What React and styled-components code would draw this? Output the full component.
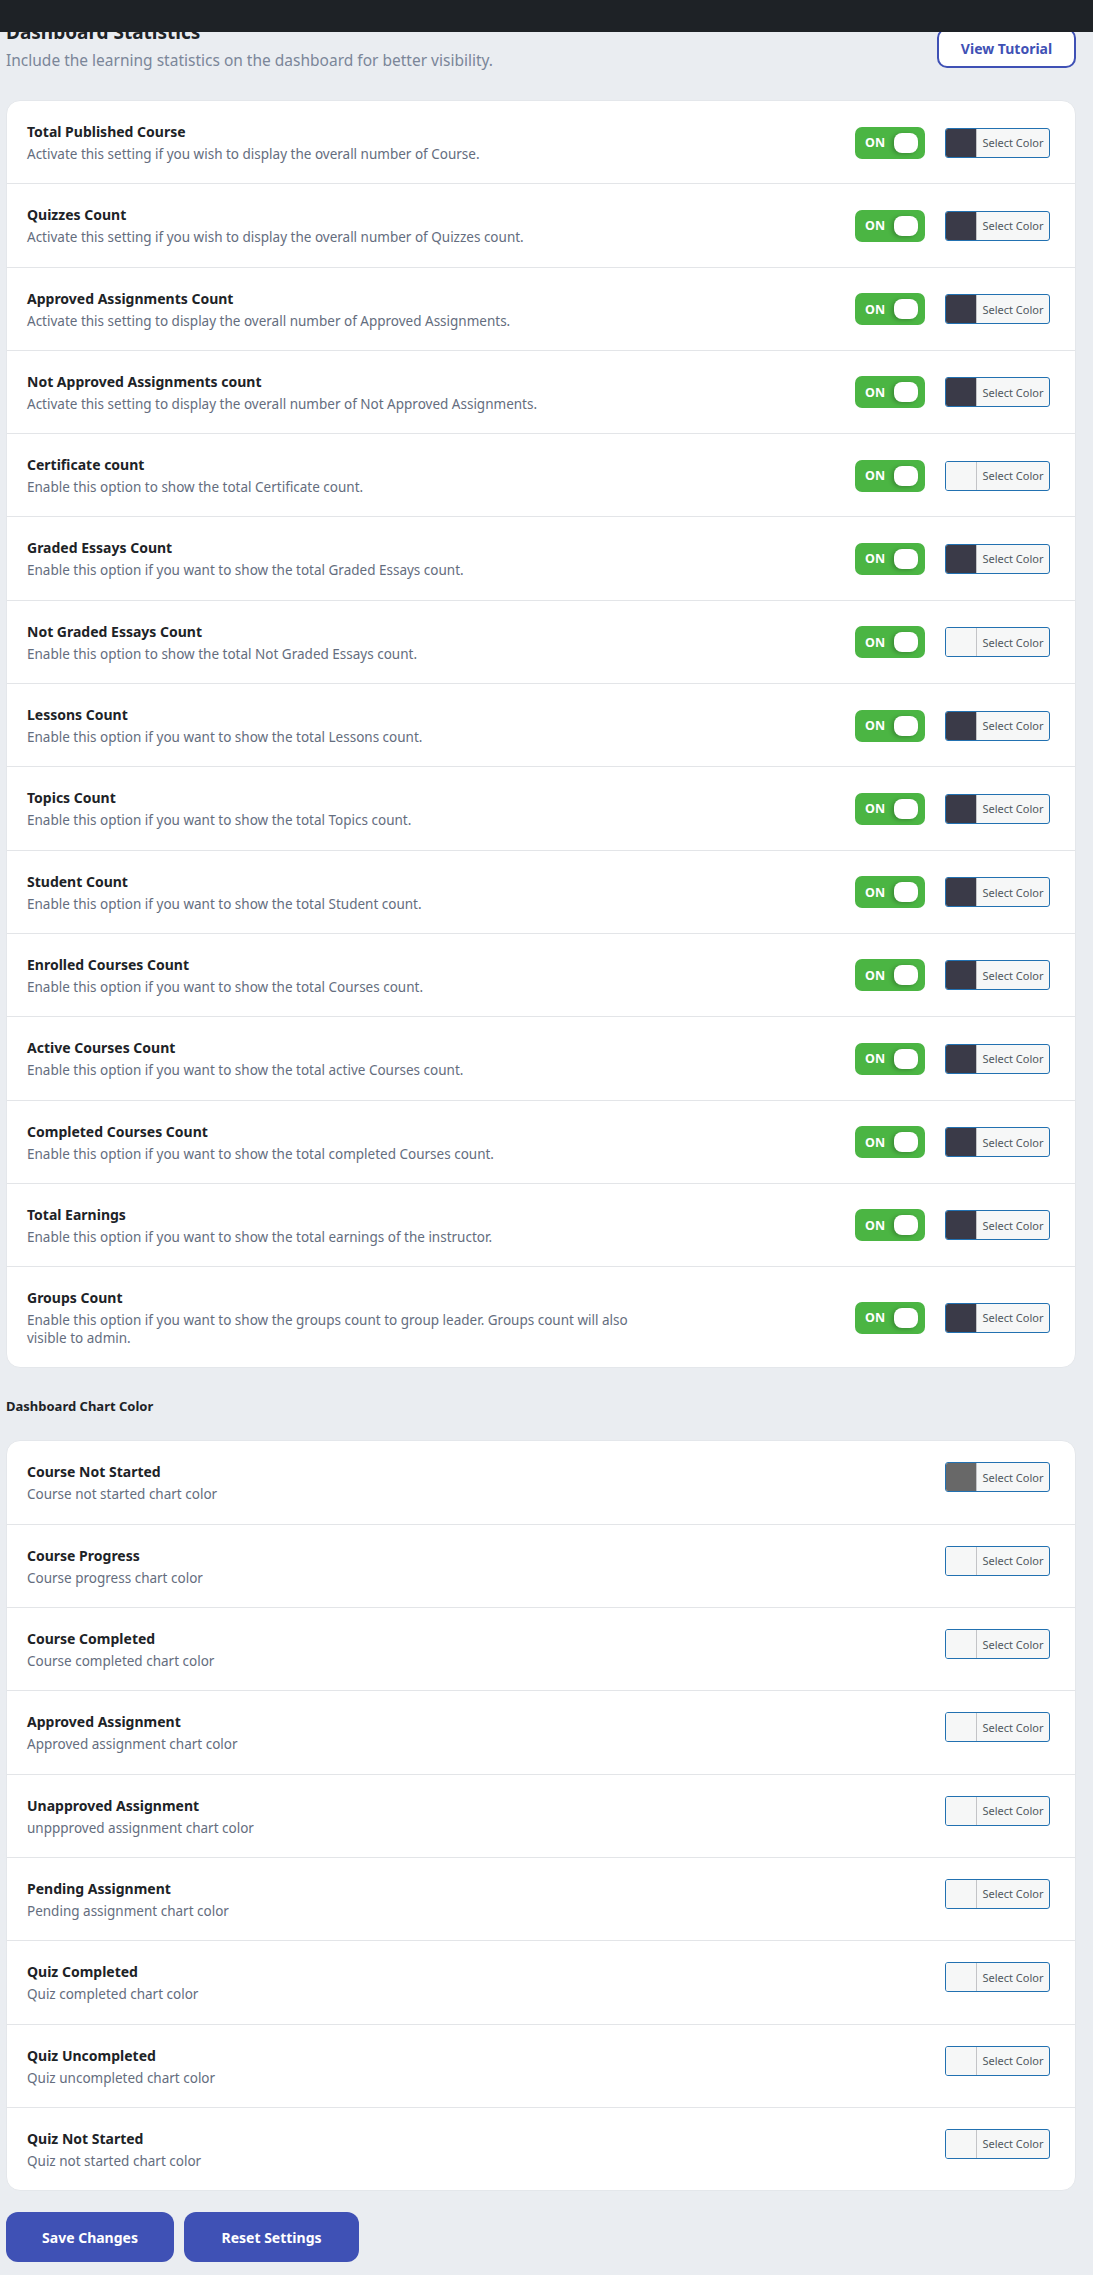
import React from "react"
import styled, { createGlobalStyle } from "styled-components"

const GlobalStyle = createGlobalStyle`
  body {
    margin: 0;
    background: #eaedf1;
    font-family: "Noto Sans", "Open Sans", sans-serif;
  }
`

const statRows = [
  ["Total Published Course", "Activate this setting if you wish to display the overall number of Course.", "#3a3a48"],
  ["Quizzes Count", "Activate this setting if you wish to display the overall number of Quizzes count.", "#3a3a48"],
  ["Approved Assignments Count", "Activate this setting to display the overall number of Approved Assignments.", "#3a3a48"],
  ["Not Approved Assignments count", "Activate this setting to display the overall number of Not Approved Assignments.", "#3a3a48"],
  ["Certificate count", "Enable this option to show the total Certificate count.", "#f6f7f7"],
  ["Graded Essays Count", "Enable this option if you want to show the total Graded Essays count.", "#3a3a48"],
  ["Not Graded Essays Count", "Enable this option to show the total Not Graded Essays count.", "#f6f7f7"],
  ["Lessons Count", "Enable this option if you want to show the total Lessons count.", "#3a3a48"],
  ["Topics Count", "Enable this option if you want to show the total Topics count.", "#3a3a48"],
  ["Student Count", "Enable this option if you want to show the total Student count.", "#3a3a48"],
  ["Enrolled Courses Count", "Enable this option if you want to show the total Courses count.", "#3a3a48"],
  ["Active Courses Count", "Enable this option if you want to show the total active Courses count.", "#3a3a48"],
  ["Completed Courses Count", "Enable this option if you want to show the total completed Courses count.", "#3a3a48"],
  ["Total Earnings", "Enable this option if you want to show the total earnings of the instructor.", "#3a3a48"],
  ["Groups Count", "Enable this option if you want to show the groups count to group leader. Groups count will also visible to admin.", "#3a3a48"],
]

const chartRows = [
  ["Course Not Started", "Course not started chart color", "#686868"],
  ["Course Progress", "Course progress chart color", "#f6f7f7"],
  ["Course Completed", "Course completed chart color", "#f6f7f7"],
  ["Approved Assignment", "Approved assignment chart color", "#f6f7f7"],
  ["Unapproved Assignment", "unppproved assignment chart color", "#f6f7f7"],
  ["Pending Assignment", "Pending assignment chart color", "#f6f7f7"],
  ["Quiz Completed", "Quiz completed chart color", "#f6f7f7"],
  ["Quiz Uncompleted", "Quiz uncompleted chart color", "#f6f7f7"],
  ["Quiz Not Started", "Quiz not started chart color", "#f6f7f7"],
]

const AdminBar = styled.div`
  position: fixed;
  top: 0;
  left: 0;
  right: 0;
  height: 32px;
  background: #1e2226;
  z-index: 10;
`

const Page = styled.div`
  padding: 20px 17px 14px 6px;
`

const Header = styled.div`
  display: flex;
  justify-content: space-between;
  align-items: flex-start;
  margin-bottom: 29px;
`

const Title = styled.h1`
  margin: 0;
  font-size: 19px;
  line-height: 24px;
  font-weight: 700;
  color: #1d2327;
`

const Subtitle = styled.p`
  margin: 6px 0 0;
  font-size: 15.5px;
  line-height: 21px;
  color: #7b8699;
`

const TutorialButton = styled.button`
  margin-top: 8px;
  width: 139px;
  height: 40px;
  background: #fff;
  border: 2px solid #3f51b5;
  border-radius: 10px;
  color: #3f51b5;
  font-family: inherit;
  font-size: 14px;
  font-weight: 700;
  cursor: pointer;
`

const Card = styled.div`
  background: #fff;
  border: 1px solid #e4e7eb;
  border-radius: 14px;
  overflow: hidden;
`

const Row = styled.div`
  display: flex;
  justify-content: space-between;
  align-items: ${(p) => (p.$top ? "flex-start" : "center")};
  padding: 21px 25px 20.3px 20px;
  border-bottom: 1px solid #e3e5e8;

  &:last-child {
    border-bottom: none;
  }
`

const Text = styled.div`
  max-width: 615px;
`

const RowTitle = styled.div`
  font-size: 14px;
  line-height: 20px;
  font-weight: 700;
  color: #1d2327;
`

const RowDesc = styled.div`
  margin-top: 3px;
  font-size: 13.5px;
  line-height: 18px;
  color: #646d7e;
`

const Controls = styled.div`
  display: flex;
  align-items: center;
  gap: 20px;
`

const Toggle = styled.div`
  position: relative;
  width: 70px;
  height: 32px;
  border-radius: 7px;
  background: #4bb543;
  box-sizing: border-box;
  padding-left: 10px;
  display: flex;
  align-items: center;
  color: #fff;
  font-size: 12.5px;
  font-weight: 700;
`

const Knob = styled.span`
  position: absolute;
  right: 7px;
  top: 6px;
  width: 24px;
  height: 20px;
  border-radius: 8px;
  background: #fff;
  box-shadow: -2px 1px 4px rgba(0, 0, 0, 0.25);
`

const Picker = styled.div`
  display: flex;
  width: 105px;
  height: 30px;
  box-sizing: border-box;
  border: 1px solid #2271b1;
  border-radius: 3px;
  overflow: hidden;
  background: #f6f7f7;
`

const Swatch = styled.span`
  width: 30px;
  background: ${(p) => p.$color};
  border-right: 1px solid #c3c4c7;
`

const PickerLabel = styled.span`
  flex: 1;
  display: flex;
  align-items: center;
  justify-content: center;
  font-size: 11px;
  color: #50575e;
`

const SectionHeading = styled.h2`
  margin: 28px 0 24px;
  font-size: 13px;
  line-height: 20px;
  font-weight: 700;
  color: #1d2327;
`

const Actions = styled.div`
  display: flex;
  gap: 10px;
  margin-top: 21px;
`

const ActionButton = styled.button`
  width: ${(p) => p.$width}px;
  height: 50px;
  border: none;
  border-radius: 12px;
  background: #3f51b5;
  color: #fff;
  font-family: inherit;
  font-size: 14px;
  font-weight: 700;
  cursor: pointer;
`

const ColorPicker = ({ color }) => (
  <Picker>
    <Swatch $color={color} />
    <PickerLabel>Select Color</PickerLabel>
  </Picker>
)

export default function App() {
  return (
    <>
      <GlobalStyle />
      <AdminBar />
      <Page>
        <Header>
          <div>
            <Title>Dashboard Statistics</Title>
            <Subtitle>Include the learning statistics on the dashboard for better visibility.</Subtitle>
          </div>
          <TutorialButton>View Tutorial</TutorialButton>
        </Header>

        <Card>
          {statRows.map(([title, desc, color]) => (
            <Row key={title}>
              <Text>
                <RowTitle>{title}</RowTitle>
                <RowDesc>{desc}</RowDesc>
              </Text>
              <Controls>
                <Toggle>
                  ON
                  <Knob />
                </Toggle>
                <ColorPicker color={color} />
              </Controls>
            </Row>
          ))}
        </Card>

        <SectionHeading>Dashboard Chart Color</SectionHeading>

        <Card>
          {chartRows.map(([title, desc, color]) => (
            <Row key={title} $top>
              <Text>
                <RowTitle>{title}</RowTitle>
                <RowDesc>{desc}</RowDesc>
              </Text>
              <Controls>
                <ColorPicker color={color} />
              </Controls>
            </Row>
          ))}
        </Card>

        <Actions>
          <ActionButton $width={168}>Save Changes</ActionButton>
          <ActionButton $width={175}>Reset Settings</ActionButton>
        </Actions>
      </Page>
    </>
  )
}
